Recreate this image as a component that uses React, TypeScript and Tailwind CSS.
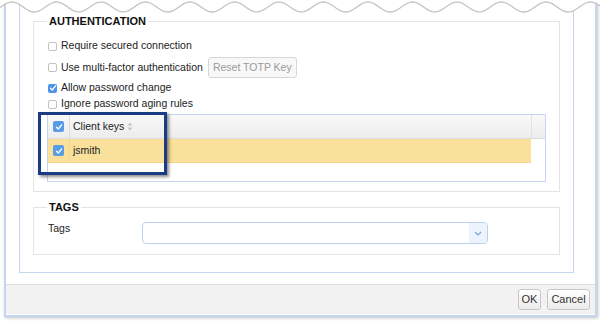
import React from "react";

const font = "font-['Liberation_Sans',Arial,sans-serif]";

// torn-paper edge at the top of the dialog
const wavePoints = () => {
  const pts: string[] = [];
  for (let x = 0; x <= 600; x += 2) {
    const y = 7 - 5 * Math.cos((2 * Math.PI * (x - 12)) / 44.5);
    pts.push(`${x},${y.toFixed(2)}`);
  }
  return pts;
};

const Wave = () => {
  const pts = wavePoints();
  return (
    <svg className="absolute left-0 top-0" width="600" height="16" viewBox="0 0 600 16">
      <path d={`M0,0 L600,0 L${pts.slice().reverse().join(" L")} Z`} fill="#ffffff" />
      <polyline points={pts.join(" ")} fill="none" stroke="#c4c4c4" strokeWidth="1.3" />
    </svg>
  );
};

const Check = () => (
  <svg width="8" height="8" viewBox="0 0 8 8">
    <path d="M1.5 4.2 L3.3 6 L6.6 1.8" fill="none" stroke="#ffffff" strokeWidth="1.3" strokeLinecap="round" strokeLinejoin="round" />
  </svg>
);

const Box = ({ checked }: { checked?: boolean }) =>
  checked ? (
    <span className="flex h-[9px] w-[9px] items-center justify-center rounded-[2px] bg-[#4f93e6]">
      <Check />
    </span>
  ) : (
    <span className="h-[9px] w-[9px] rounded-[2px] border border-[#c2c2c2] bg-white" />
  );

const BlueBox = () => (
  <span className="flex h-[11px] w-[11px] items-center justify-center rounded-[2px] bg-[#5a9be8]">
    <Check />
  </span>
);

const Row = ({ label, checked, className = "" }: { label: string; checked?: boolean; className?: string }) => (
  <div className={`flex h-[16px] items-center gap-[4px] pl-[1px] ${className}`}>
    <Box checked={checked} />
    <span>{label}</span>
  </div>
);

const SortIcon = () => (
  <svg width="6" height="9" viewBox="0 0 6 9" className="ml-[3px]">
    <path d="M3 0.5 L5.5 3.5 H0.5 Z" fill="#c4c4c4" />
    <path d="M3 8.5 L5.5 5.5 H0.5 Z" fill="#c4c4c4" />
  </svg>
);

export default function App() {
  return (
    <div className={`relative h-[323px] w-[600px] overflow-hidden bg-white text-[10.5px] text-[#222] ${font}`}>
      <div className="ml-[4px] flex h-[317px] w-[593px] flex-col border-x-2 border-b-2 border-[#c7d6f0] shadow-[1px_1px_3px_rgba(0,0,0,0.25)]">
        <div className="pl-[13px] pr-[21px]">
          <div className="border-x border-b border-[#c7d6f0] px-[13px] pb-[17px] pt-[15px]">
            <fieldset className="border border-[#e4e4e4] px-[13px] pb-[9px]">
              <legend className="px-[2px] text-[11px] font-bold leading-[13px] text-[#111]">AUTHENTICATION</legend>
              <Row label="Require secured connection" className="mt-[10px]" />
              <div className="mt-[3px] flex h-[21px] items-center pl-[1px]">
                <Box />
                <span className="ml-[4px]">Use multi-factor authentication</span>
                <button className="ml-[5px] h-[21px] w-[89px] rounded-[3px] border border-[#d6d6d6] bg-[#f8f8f8] text-[10.5px] text-[#9a9a9a]">
                  Reset TOTP Key
                </button>
              </div>
              <Row label="Allow password change" checked className="mt-[2px]" />
              <Row label="Ignore password aging rules" />
              <div className="mt-[2px] border border-[#c7d6f0]">
                <div className="flex h-[24px] border-b border-[#dcdcdc] bg-gradient-to-b from-[#f9f9f9] to-[#ececec]">
                  <div className="flex w-[22px] items-center justify-center border-r border-[#dddddd]">
                    <BlueBox />
                  </div>
                  <div className="flex flex-1 items-center pl-[3px]">
                    Client keys
                    <SortIcon />
                  </div>
                  <div className="w-[14px] border-l border-[#e2e2e2]" />
                </div>
                <div className="mr-[14px] flex h-[24px] border-b border-[#efd68a] bg-[#f9e19b]">
                  <div className="flex w-[22px] items-center justify-center border-r border-[#eed996]">
                    <BlueBox />
                  </div>
                  <div className="flex items-center pl-[3px]">jsmith</div>
                </div>
                <div className="h-[18px]" />
              </div>
            </fieldset>

            <fieldset className="mt-[9px] border border-[#e4e4e4] px-[13px] pb-[10px]">
              <legend className="px-[2px] text-[11px] font-bold leading-[13px] text-[#111]">TAGS</legend>
              <div className="mt-[8px] flex items-start pl-[1px]">
                <span className="mt-[-1px] w-[94px]">Tags</span>
                <div className="flex h-[22px] w-[346px] overflow-hidden rounded-[4px] border border-[#bcd0ee] bg-white">
                  <div className="flex-1" />
                  <div className="flex w-[18px] items-center justify-center bg-[#edf3fc]">
                    <svg width="8" height="5" viewBox="0 0 8 5">
                      <path d="M1 1 L4 4 L7 1" fill="none" stroke="#7fa4dc" strokeWidth="1.2" />
                    </svg>
                  </div>
                </div>
              </div>
            </fieldset>
          </div>
        </div>

        <div className="mt-[11px] flex h-[30px] items-center justify-end gap-[6px] border-t border-[#dcdcdc] bg-[#f2f2f2] pr-[5px]">
          <button className="h-[21px] w-[23px] rounded-[3px] border border-[#c6c6c6] bg-gradient-to-b from-white to-[#ececec] text-[11px] text-[#333]">
            OK
          </button>
          <button className="h-[21px] w-[43px] rounded-[3px] border border-[#c6c6c6] bg-gradient-to-b from-white to-[#ececec] text-[11px] text-[#333]">
            Cancel
          </button>
        </div>
      </div>

      {/* annotation highlight */}
      <div className="absolute left-[38px] top-[112px] h-[63px] w-[129px] border-[3px] border-[#1b3c84] shadow-[2px_2px_3px_rgba(0,0,0,0.45)]" />

      <Wave />
    </div>
  );
}
